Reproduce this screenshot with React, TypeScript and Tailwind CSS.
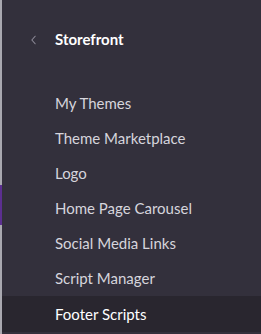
const items = [
  "My Themes",
  "Theme Marketplace",
  "Logo",
  "Home Page Carousel",
  "Social Media Links",
  "Script Manager",
];

function ChevronLeft() {
  return (
    <svg viewBox="0 0 8 12" className="h-[10px] w-[7px]" fill="none" stroke="#8e8b99" strokeWidth="1.3" strokeLinecap="round" strokeLinejoin="round" aria-hidden>
      <polyline points="6 1.5 2 6 6 10.5" />
    </svg>
  );
}

export default function App() {
  return (
    <div className="flex h-[334px] w-[261px] overflow-hidden bg-[#33303c] font-['Lato',sans-serif]">
      {/* page edge behind the sidebar */}
      <div className="flex w-[2px] flex-none flex-col bg-[#a9a8b0]">
        <div className="h-[185px]" />
        <div className="h-[40px] bg-[#5c2f91]" />
      </div>

      <div className="flex flex-1 flex-col">
        <div className="flex h-[78px] items-center pl-[28px] pt-[1px]">
          <ChevronLeft />
          <span className="ml-[18px] text-[15px] font-bold text-white">Storefront</span>
        </div>
        <div className="h-[8px]" />
        {items.map((label) => (
          <div key={label} className="flex h-[35px] items-center pl-[53px] text-[15px] text-[#d6d5dc]">
            {label}
          </div>
        ))}
        <div className="flex h-[36px] items-center bg-[#29262f] pl-[53px] text-[15px] text-white">
          Footer Scripts
        </div>
      </div>
    </div>
  );
}
